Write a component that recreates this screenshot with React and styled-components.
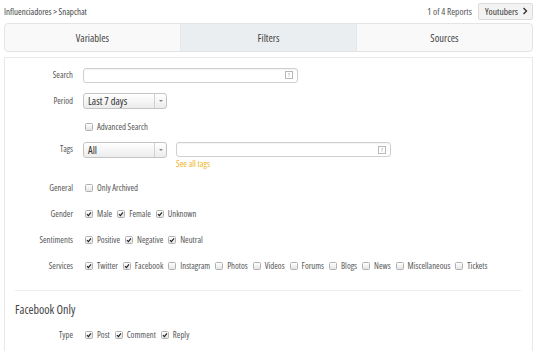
import React from 'react';
import styled, { createGlobalStyle } from 'styled-components';

const Global = createGlobalStyle`
  body {
    margin: 0;
    background: #fff;
    font-family: "Open Sans", "Roboto Condensed", "Liberation Sans", sans-serif;
    font-stretch: condensed;
    color: #444;
  }
`;

const Page = styled.div`
  padding: 0 7px 0 4px;
`;

const TopBar = styled.div`
  display: flex;
  align-items: center;
  height: 22px;
`;

const Crumbs = styled.div`
  flex: 1;
  font-size: 8.9px;
  color: #444;
`;

const Count = styled.span`
  font-size: 9.4px;
  color: #555;
  margin-right: 6px;
`;

const NextButton = styled.button`
  display: flex;
  align-items: center;
  gap: 4px;
  height: 17px;
  padding: 0 4px 0 6px;
  border: 1px solid #dcdcdc;
  border-radius: 2px;
  background: #f3f3f3;
  font: inherit;
  font-size: 9.5px;
  color: #333;
`;

const Tabs = styled.div`
  display: flex;
  height: 27px;
  margin-top: 1px;
  border: 1px solid #e4e4e4;
  border-radius: 4px;
  background: #f9f9f9;
  overflow: hidden;
`;

const Tab = styled.div`
  flex: 1;
  display: flex;
  align-items: center;
  justify-content: center;
  font-size: 10.5px;
  color: #444;
  background: ${p => (p.$active ? '#ebeef0' : 'transparent')};
  & + & {
    border-left: 1px solid #e8e8e8;
  }
`;

const Panel = styled.div`
  margin-top: 5px;
  border: 1px solid #e8e8e8;
  border-bottom: none;
  padding: 4px 0 20px;
`;

const Row = styled.div`
  display: grid;
  grid-template-columns: 68px 1fr;
  column-gap: 10px;
  align-items: ${p => (p.$top ? 'start' : 'center')};
  min-height: 26px;
  padding: ${p => (p.$top ? '2px 0 0' : '0')};
  font-size: 8.7px;
`;

const Label = styled.div`
  text-align: right;
  color: #555;
  line-height: ${p => (p.$top ? '14px' : 'normal')};
`;

const Controls = styled.div`
  display: flex;
  align-items: ${p => (p.$top ? 'flex-start' : 'center')};
  gap: ${p => p.$gap || 0}px;
`;

const InputBox = styled.div`
  position: relative;
  width: ${p => p.$w}px;
  height: 15px;
  box-sizing: border-box;
  border: 1px solid #d0d0d0;
  border-radius: 3px;
  background: #fff;
  box-shadow: inset 0 1px 1px rgba(0, 0, 0, 0.05);
`;

const Help = styled.span`
  position: absolute;
  right: 4px;
  top: 2.5px;
  width: 8px;
  height: 8px;
  box-sizing: border-box;
  border: 1px solid #b8b8b8;
  font-size: 6px;
  line-height: 6px;
  text-align: center;
  color: #999;
`;

const Select = styled.div`
  display: flex;
  align-items: center;
  width: 84px;
  height: 16px;
  box-sizing: border-box;
  border: 1px solid #c4c4c4;
  border-radius: 3px;
  background: linear-gradient(#fff, #ececec);
  font-size: 10.5px;
  color: #333;
`;

const SelectText = styled.span`
  flex: 1;
  padding-left: 4px;
`;

const Caret = styled.span`
  width: 11px;
  height: 100%;
  border-left: 1px solid #d0d0d0;
  display: flex;
  align-items: center;
  justify-content: center;
  &::after {
    content: '';
    border-left: 2px solid transparent;
    border-right: 2px solid transparent;
    border-top: 2px solid #888;
  }
`;

const Stack = styled.div`
  display: flex;
  flex-direction: column;
`;

const Link = styled.a`
  color: #f0b419;
  font-size: 8.9px;
  line-height: 11px;
  margin-top: 1px;
  padding-bottom: 6px;
`;

const Item = styled.label`
  display: inline-flex;
  align-items: center;
  gap: 4px;
  margin-right: 5px;
  color: #555;
`;

const Box = styled.span`
  display: inline-flex;
  align-items: center;
  justify-content: center;
  width: 6px;
  height: 6px;
  border: 1px solid #b0b0b0;
  border-radius: 1.5px;
  background: linear-gradient(#fff, #e4e4e4);
`;

const Check = ({ on, children, indent }) => (
  <Item style={indent ? { marginLeft: indent } : undefined}>
    <Box>
      {on && (
        <svg width="6" height="6" viewBox="0 0 6 6">
          <path d="M1 3.2 L2.4 4.6 L5 1.4" fill="none" stroke="#222" strokeWidth="1.2" />
        </svg>
      )}
    </Box>
    {children}
  </Item>
);

const Separator = styled.hr`
  border: none;
  border-top: 1px solid #ececec;
  margin: 11px 11px 0 10px;
`;

const Heading = styled.h3`
  margin: 0;
  padding: 10px 0 4px 10px;
  font-size: 12px;
  font-weight: normal;
  color: #444;
`;

const Chevron = () => (
  <svg width="6" height="8" viewBox="0 0 6 8">
    <path d="M1.5 1 L4.5 4 L1.5 7" fill="none" stroke="#333" strokeWidth="1.4" />
  </svg>
);

export default function App() {
  return (
    <Page>
      <Global />
      <TopBar>
        <Crumbs>Influenciadores &gt; Snapchat</Crumbs>
        <Count>1 of 4 Reports</Count>
        <NextButton>
          Youtubers <Chevron />
        </NextButton>
      </TopBar>
      <Tabs>
        <Tab>Variables</Tab>
        <Tab $active>Filters</Tab>
        <Tab>Sources</Tab>
      </Tabs>
      <Panel>
        <Row>
          <Label>Search</Label>
          <Controls>
            <InputBox $w={215}>
              <Help>?</Help>
            </InputBox>
          </Controls>
        </Row>
        <Row>
          <Label>Period</Label>
          <Controls>
            <Select>
              <SelectText>Last 7 days</SelectText>
              <Caret />
            </Select>
          </Controls>
        </Row>
        <Row>
          <Label />
          <Controls>
            <Check indent={2}>Advanced Search</Check>
          </Controls>
        </Row>
        <Row $top>
          <Label $top>Tags</Label>
          <Controls $top $gap={9}>
            <Select>
              <SelectText>All</SelectText>
              <Caret />
            </Select>
            <Stack>
              <InputBox $w={215}>
                <Help>?</Help>
              </InputBox>
              <Link>See all tags</Link>
            </Stack>
          </Controls>
        </Row>
        <Row>
          <Label>General</Label>
          <Controls>
            <Check indent={2}>Only Archived</Check>
          </Controls>
        </Row>
        <Row>
          <Label>Gender</Label>
          <Controls>
            <Check on indent={2}>Male</Check>
            <Check on>Female</Check>
            <Check on>Unknown</Check>
          </Controls>
        </Row>
        <Row>
          <Label>Sentiments</Label>
          <Controls>
            <Check on indent={2}>Positive</Check>
            <Check on>Negative</Check>
            <Check on>Neutral</Check>
          </Controls>
        </Row>
        <Row>
          <Label>Services</Label>
          <Controls>
            <Check on indent={2}>Twitter</Check>
            <Check on>Facebook</Check>
            <Check>Instagram</Check>
            <Check>Photos</Check>
            <Check>Videos</Check>
            <Check>Forums</Check>
            <Check>Blogs</Check>
            <Check>News</Check>
            <Check>Miscellaneous</Check>
            <Check>Tickets</Check>
          </Controls>
        </Row>
        <Separator />
        <Heading>Facebook Only</Heading>
        <Row>
          <Label>Type</Label>
          <Controls>
            <Check on indent={2}>Post</Check>
            <Check on>Comment</Check>
            <Check on>Reply</Check>
          </Controls>
        </Row>
      </Panel>
    </Page>
  );
}
